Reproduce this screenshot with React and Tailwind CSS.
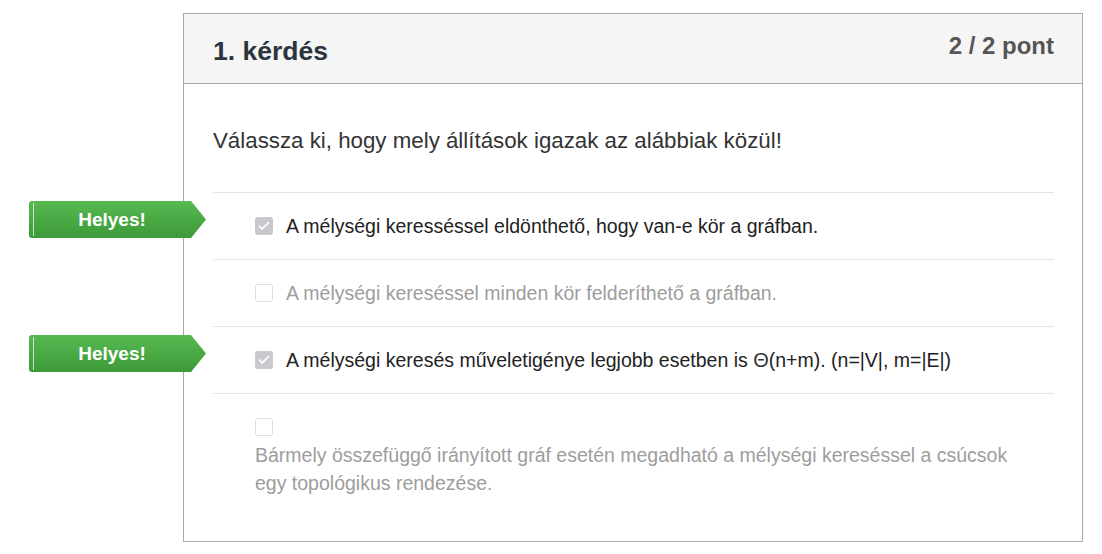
import { Check } from "lucide-react";

const options = [
  {
    text: "A mélységi  keresséssel eldönthető, hogy van-e kör a gráfban.",
    checked: true,
    correct: true,
  },
  {
    text: "A mélységi kereséssel minden kör felderíthető a gráfban.",
    checked: false,
  },
  {
    text: (
      <>
        A mélységi keresés műveletigénye legjobb esetben is{" "}
        <span className="text-[20px] text-[#333]">Θ</span>(n+m). (n=|V|, m=|E|)
      </>
    ),
    checked: true,
    correct: true,
  },
  {
    text: "Bármely összefüggő irányított gráf esetén megadható a mélységi kereséssel a csúcsok egy topológikus rendezése.",
    checked: false,
    block: true,
  },
];

export default function App() {
  return (
    <div className="bg-white min-h-screen pt-[13px] font-['Liberation_Sans',Arial,sans-serif]">
      <div className="ml-[183px] w-[900px] border border-[#a9a9a9]">
        {/* HEADER */}
        <div className="h-[70px] bg-[#f5f5f5] border-b border-[#a9a9a9] flex justify-between pl-[29px] pr-[28px]">
          <h2 className="text-[26.5px] font-bold text-[#2c3440] pt-[23px] leading-7">
            1. kérdés
          </h2>
          <div className="text-[24px] font-bold text-[#555] pt-[18px] leading-7">
            2 / 2 pont
          </div>
        </div>

        {/* BODY */}
        <div className="pt-[43px] pb-[25px] pl-[29px] pr-[28px]">
          <p className="text-[22.3px] leading-7 text-[#333] mb-[37px]">
            Válassza ki, hogy mely állítások igazak az alábbiak közül!
          </p>

          <div className="border-t border-[#e5e5e5]">
            {options.map((o, i) => (
              <Option key={i} {...o} last={i === options.length - 1} />
            ))}
          </div>
        </div>
      </div>
    </div>
  );
}

function Option({ text, checked, correct, block, last }) {
  return (
    <div
      className={`relative py-[19px] pl-[42px] pr-[40px] text-[19.5px] leading-7 ${
        last ? "" : "border-b border-[#e5e5e5]"
      } ${checked ? "text-[#222]" : "text-[#9d9d9d]"}`}
    >
      {correct && <Badge />}
      <div className={block ? "" : "flex items-center gap-[13px]"}>
        <div className="h-7 flex items-center">
          <Box checked={checked} />
        </div>
        <div>{text}</div>
      </div>
    </div>
  );
}

function Box({ checked }) {
  if (checked) {
    return (
      <span className="w-[18px] h-[18px] rounded-[3px] bg-[#c9c9cd] flex items-center justify-center">
        <Check size={14} strokeWidth={3} className="text-white" />
      </span>
    );
  }
  return (
    <span className="w-[18px] h-[18px] rounded-[3px] border border-[#dcdcdc] bg-white block" />
  );
}

function Badge() {
  return (
    <div className="absolute left-[-184px] top-[8px] w-[177px] h-[37px] rounded-l-[3px] bg-gradient-to-b from-[#58b952] to-[#3c9a38] [clip-path:polygon(0_0,162px_0,177px_50%,162px_100%,0_100%)] flex items-center">
      <span className="absolute left-[4px] top-[2px] bottom-[2px] w-px bg-white/70" />
      <span className="w-[166px] text-center text-white font-bold text-[19px] leading-none">
        Helyes!
      </span>
    </div>
  );
}
